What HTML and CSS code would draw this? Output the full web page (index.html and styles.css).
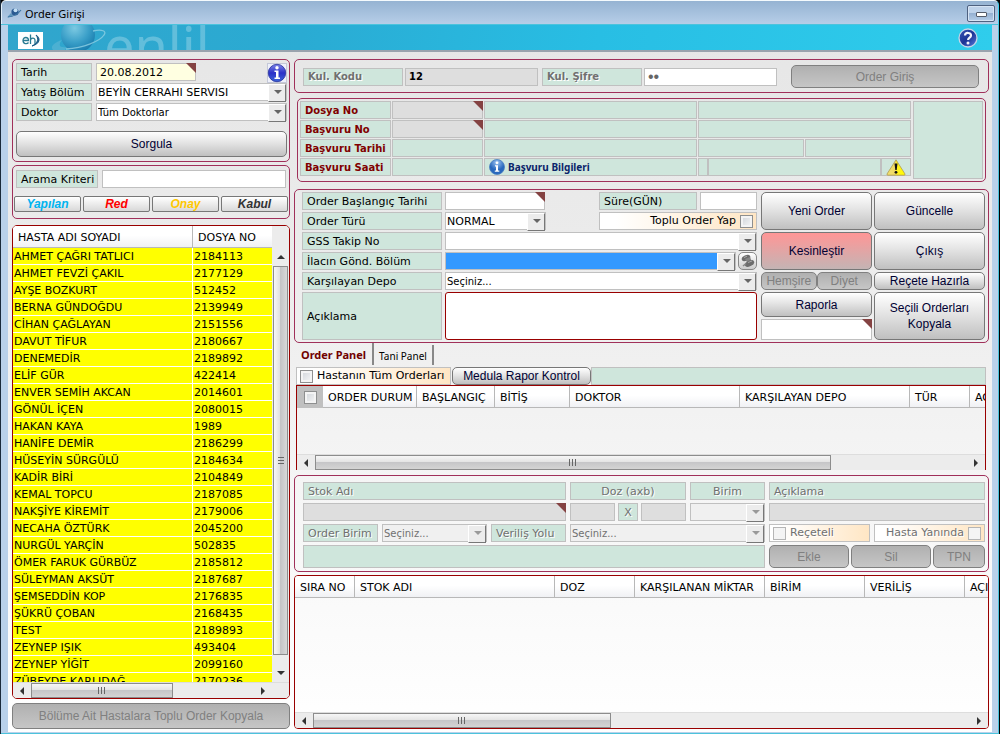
FILE: index.html
```html
<!DOCTYPE html>
<html lang="tr">
<head>
<meta charset="utf-8">
<title>Order Girişi</title>
<link rel="stylesheet" href="styles.css">
</head>
<body>
<div class="window">
  <header class="titlebar">
    <svg class="title-icon" width="15" height="12" viewBox="0 0 15 12" aria-hidden="true"><path d="M0 10.500 4 6l2 3z" fill="#5f97bd"/><circle cx="8" cy="5" r="3.600" fill="#2a5a92"/><circle cx="8.500" cy="3.300" r="2" fill="#c4e0f4"/><path d="M1 10Q9 9.500 14 3" fill="none" stroke="#3d75a3" stroke-width="1.200"/></svg>
    <h1 class="title">Order Girişi</h1>
    <button class="minimize" aria-label="Simge durumuna küçült"><span class="min-glyph"></span></button>
  </header>
  <div class="frame">
    <div class="banner">
      <svg class="logo" width="25" height="17" viewBox="0 0 25 17" role="img" aria-label="eh"><rect width="25" height="17" fill="#fff"/><g fill="none" stroke="#2a7b92" stroke-width="1.3"><path d="M5 8.500h5.500C10.500 4.500 5 4.500 5 8.500c0 3.500 4 4 5.500 2"/><path d="M12.500 2.500V12M12.500 8.500c0-3 4.500-3.500 4.500 0V12"/></g><path d="M18 3c5 3 4 9-4 11 6-3 7-7 4-11z" fill="#1d5b86" stroke="#1d5b86"/></svg>
      <svg class="planet" width="56" height="25" viewBox="0 0 56 25" aria-hidden="true"><defs><radialGradient id="pl" cx=".4" cy=".3" r=".7"><stop offset="0" stop-color="#7cc9e2"/><stop offset=".6" stop-color="#3a9fc8"/><stop offset="1" stop-color="#1b7fb0"/></radialGradient></defs><path d="M11 15C2 18-1 22 2 25h12l2-3C8 23 7 20 11 15z" fill="#5fb8d6" opacity=".6"/><circle cx="27" cy="10" r="17" fill="url(#pl)"/><path d="M42 6c9-2 14 0 11 4-4 6-20 13-38 14" fill="none" stroke="#8fd0e4" stroke-width="1.300" opacity=".8"/></svg>
      <span class="brand">enlil</span>
      <button class="help" aria-label="Yardım"><svg width="20" height="20" viewBox="0 0 20 20"><defs><linearGradient id="hp" x2="1" y2="1"><stop offset="0" stop-color="#3a55b5"/><stop offset=".5" stop-color="#1c3495"/><stop offset="1" stop-color="#5a7fe0"/></linearGradient></defs><circle cx="10" cy="10" r="9" fill="url(#hp)" stroke="#c5d5e8" stroke-width="1.300"/><path d="M7 7.500c.2-3.500 6.300-3.300 6 .2-.2 2-2.900 2-2.900 4.300" fill="none" stroke="#f3f3fa" stroke-width="2.200"/><circle cx="10" cy="15" r="1.500" fill="#f3f3fa"/></svg></button>
    </div>
    <main class="content">
      <section class="side">
        <form class="panel search">
          <div class="row"><label class="cell w76" for="tarih">Tarih</label><span class="marked w100"><input class="field date" id="tarih" value="20.08.2012"></span><span class="grow"></span><button type="button" class="info-btn" aria-label="Bilgi"><svg width="20" height="20" viewBox="0 0 20 20"><defs><linearGradient id="in" y2="1" x2="0"><stop offset="0" stop-color="#7d85e8"/><stop offset=".5" stop-color="#2b30c8"/><stop offset="1" stop-color="#3d66d8"/></linearGradient></defs><rect x=".5" y=".5" width="19" height="19" fill="#eef0fa" stroke="#c4c8d8"/><circle cx="10" cy="10" r="8.700" fill="url(#in)" stroke="#26309a" stroke-width=".8"/><circle cx="10" cy="4.700" r="1.700" fill="#fff"/><path d="M7.500 7.500h4v7h1.500v1.500h-5.500v-1.500H9V9H7.500z" fill="#fff"/></svg></button></div>
          <div class="row"><label class="cell w76" for="bolum">Yatış Bölüm</label><span class="combo grow"><select id="bolum"><option>BEYİN CERRAHI SERVISI</option></select></span></div>
          <div class="row"><label class="cell w76" for="doktor">Doktor</label><span class="combo small grow"><select id="doktor"><option>Tüm Doktorlar</option></select></span></div>
          <button type="button" class="btn query">Sorgula</button>
        </form>
        <form class="panel filter">
          <div class="row filter-row"><label class="cell w82" for="arama">Arama Kriteri</label><input class="field grow" id="arama"></div>
          <div class="states"><button type="button" class="state done">Yapılan</button><button type="button" class="state red">Red</button><button type="button" class="state wait">Onay</button><button type="button" class="state ok">Kabul</button></div>
        </form>
        <div class="list">
          <div class="list-main">
            <div class="list-view">
              <table class="patients">
                <colgroup><col><col class="no-col"></colgroup>
                <thead><tr><th>HASTA ADI SOYADI</th><th>DOSYA NO</th></tr></thead>
                <tbody>
                <tr><td>AHMET ÇAĞRI TATLICI</td><td>2184113</td></tr>
                <tr><td>AHMET FEVZİ ÇAKIL</td><td>2177129</td></tr>
                <tr><td>AYŞE BOZKURT</td><td>512452</td></tr>
                <tr><td>BERNA GÜNDOĞDU</td><td>2139949</td></tr>
                <tr><td>CİHAN ÇAĞLAYAN</td><td>2151556</td></tr>
                <tr><td>DAVUT TİFUR</td><td>2180667</td></tr>
                <tr><td>DENEMEDİR</td><td>2189892</td></tr>
                <tr><td>ELİF GÜR</td><td>422414</td></tr>
                <tr><td>ENVER SEMİH AKCAN</td><td>2014601</td></tr>
                <tr><td>GÖNÜL İÇEN</td><td>2080015</td></tr>
                <tr><td>HAKAN KAYA</td><td>1989</td></tr>
                <tr><td>HANİFE DEMİR</td><td>2186299</td></tr>
                <tr><td>HÜSEYİN SÜRGÜLÜ</td><td>2184634</td></tr>
                <tr><td>KADİR BİRİ</td><td>2104849</td></tr>
                <tr><td>KEMAL TOPCU</td><td>2187085</td></tr>
                <tr><td>NAKŞİYE KİREMİT</td><td>2179006</td></tr>
                <tr><td>NECAHA ÖZTÜRK</td><td>2045200</td></tr>
                <tr><td>NURGÜL YARÇİN</td><td>502835</td></tr>
                <tr><td>ÖMER FARUK GÜRBÜZ</td><td>2185812</td></tr>
                <tr><td>SÜLEYMAN AKSÜT</td><td>2187687</td></tr>
                <tr><td>ŞEMSEDDİN KOP</td><td>2176835</td></tr>
                <tr><td>ŞÜKRÜ ÇOBAN</td><td>2168435</td></tr>
                <tr><td>TEST</td><td>2189893</td></tr>
                <tr><td>ZEYNEP IŞIK</td><td>493404</td></tr>
                <tr><td>ZEYNEP YİĞİT</td><td>2099160</td></tr>
                <tr><td>ZÜBEYDE KARLIDAĞ</td><td>2170236</td></tr>
                </tbody>
              </table>
            </div>
            <div class="vbar"><span class="arrow up"></span><span class="vthumb"></span><span class="arrow down"></span></div>
          </div>
          <div class="hbar list-hbar"><span class="arrow left"></span><span class="hthumb t-list"></span><span class="grow"></span><span class="arrow right"></span></div>
        </div>
        <button class="btn bulk" disabled>Bölüme Ait Hastalara Toplu Order Kopyala</button>
      </section>

      <section class="work">
        <form class="panel login">
          <label class="cell bold dim w100" for="kod">Kul. Kodu</label>
          <input class="field grey code" id="kod" value="12">
          <label class="cell bold dim w100 second" for="sifre">Kul. Şifre</label>
          <input class="field pass" id="sifre" type="password" value="12">
          <button type="button" class="btn grow enter" disabled>Order Giriş</button>
        </form>

        <div class="panel visit">
          <div class="visit-grid">
            <label class="cell head" for="dosya">Dosya No</label><span class="marked"><input class="field grey" id="dosya"></span><div class="cell"></div><div class="cell"></div>
            <label class="cell head" for="basvuru">Başvuru No</label><span class="marked"><input class="field grey" id="basvuru"></span><div class="cell"></div><div class="cell"></div>
            <div class="cell head">Başvuru Tarihi</div><div class="cell"></div><div class="cell"></div><div class="halves"><div class="cell grow"></div><div class="cell grow"></div></div>
            <div class="cell head">Başvuru Saati</div><div class="cell"></div>
            <div class="cell visit-info"><svg width="16" height="16" viewBox="0 0 16 16" aria-hidden="true"><defs><radialGradient id="vi" cx=".5" cy=".2"><stop offset="0" stop-color="#9cc4f2"/><stop offset="1" stop-color="#2968bd"/></radialGradient></defs><circle cx="8" cy="8" r="7.500" fill="url(#vi)" stroke="#4a7fc0" stroke-width=".8"/><circle cx="8" cy="3.800" r="1.400" fill="#fff"/><path d="M6 6.300h3v5.200h1.300v1.300H5.800v-1.300H7V7.600H6z" fill="#fff"/></svg><span>Başvuru Bilgileri</span></div>
            <div class="strip"><div class="cell s1"></div><div class="cell grow"></div><div class="cell s3"><svg width="20" height="17" viewBox="0 0 20 17" role="img" aria-label="Uyarı"><defs><linearGradient id="wa"><stop offset="0" stop-color="#f0e070"/><stop offset=".5" stop-color="#f0d860"/><stop offset=".5" stop-color="#ffee20"/><stop offset="1" stop-color="#ffff00"/></linearGradient></defs><path d="M10 .8 19 15q.3 1.200-1 1.200H2Q.7 16.200 1 15z" fill="url(#wa)" stroke="#b09a50" stroke-width=".8"/><path d="M8.500 4.500h3L10.700 11H9.300z" fill="#111"/><circle cx="10" cy="13.300" r="1.400" fill="#111"/></svg></div></div>
          </div>
          <div class="cell photo"></div>
        </div>

        <form class="panel order">
          <div class="order-form">
            <label class="cell" for="bas">Order Başlangıç Tarihi</label>
            <div class="line"><span class="marked w100"><input class="field" id="bas"></span><span class="grow"></span><label class="cell w98" for="sure">Süre(GÜN)</label><input class="field w57" id="sure"></div>
            <label class="cell" for="tur">Order Türü</label>
            <div class="line"><span class="combo w101"><select id="tur"><option>NORMAL</option></select></span><span class="grow"></span><label class="cell check end w158">Toplu Order Yap<input type="checkbox"></label></div>
            <label class="cell" for="gss">GSS Takip No</label>
            <span class="combo"><select id="gss"><option></option></select></span>
            <label class="cell" for="ilac">İlacın Gönd. Bölüm</label>
            <div class="line pin-line"><span class="combo blue grow"><select id="ilac"><option></option></select></span><button type="button" class="pin" aria-label="Sabitle"><svg width="15" height="14" viewBox="0 0 15 14"><ellipse cx="6" cy="4" rx="4.500" ry="2.800" fill="#6c6c6c" transform="rotate(-25 6 4)"/><path d="M5 5l5-2 2 5-4 2z" fill="#858585"/><ellipse cx="9.500" cy="9.500" rx="5" ry="2.800" fill="#6c6c6c" transform="rotate(-25 9.500 9.500)"/><path d="M3 12l3-2.500" stroke="#888" stroke-width="1.500"/><path d="M4 3.500l3-1.300M8 8.500l4-1.500" stroke="#aaa"/></svg></button></div>
            <label class="cell" for="depo">Karşılayan Depo</label>
            <span class="combo small"><select id="depo"><option>Seçiniz...</option></select></span>
            <label class="cell" for="acik">Açıklama</label>
            <textarea class="note" id="acik"></textarea>
          </div>
          <div class="actions">
            <button type="button" class="btn">Yeni Order</button><button type="button" class="btn">Güncelle</button>
            <button type="button" class="btn pink">Kesinleştir</button><button type="button" class="btn">Çıkış</button>
            <div class="pair"><button type="button" class="btn" disabled>Hemşire</button><button type="button" class="btn" disabled>Diyet</button></div><button type="button" class="btn">Reçete Hazırla</button>
            <div class="report"><button type="button" class="btn">Raporla</button><span class="marked"><input class="field" aria-label="Rapor"></span></div><button type="button" class="btn">Seçili Orderları<br>Kopyala</button>
          </div>
        </form>

        <div class="tabs" role="tablist"><button class="tab active" role="tab" aria-selected="true">Order Panel</button><button class="tab" role="tab" aria-selected="false">Tani Panel</button></div>

        <div class="toolbar"><label class="cell check all"><input type="checkbox">Hastanın Tüm Orderları</label><button class="btn medula">Medula Rapor Kontrol</button><div class="cell grow"></div></div>

        <div class="grid-box orders">
          <div class="grid-view">
            <table class="grid">
              <thead><tr><th class="pick"><input type="checkbox" aria-label="Tümünü seç"></th><th class="c94">ORDER DURUM</th><th class="c78">BAŞLANGIÇ</th><th class="c75">BİTİŞ</th><th class="c170">DOKTOR</th><th class="c170">KARŞILAYAN DEPO</th><th class="c60">TÜR</th><th class="c80">AÇIKLAMA</th></tr></thead>
            </table>
          </div>
          <div class="hbar"><span class="arrow left"></span><span class="hthumb t-orders"></span><span class="grow"></span><span class="arrow right"></span></div>
        </div>

        <form class="panel stock">
          <div class="cell dim">Stok Adı</div><div class="cell dim mid">Doz (axb)</div><div class="cell dim mid">Birim</div><label class="cell dim" for="aciklama2">Açıklama</label>
          <span class="marked"><input class="field grey" aria-label="Stok Adı" disabled></span>
          <div class="dose"><input class="field grey" aria-label="Doz a" disabled><span class="cell dim mid x">X</span><input class="field grey" aria-label="Doz b" disabled></div>
          <span class="combo off"><select aria-label="Birim" disabled><option></option></select></span>
          <input class="field grey" id="aciklama2" disabled>
          <div class="unit"><label class="cell dim w75" for="obirim">Order Birim</label><span class="combo small off grow"><select id="obirim" disabled><option>Seçiniz...</option></select></span><label class="cell dim w75" for="yol">Veriliş Yolu</label></div>
          <span class="combo small off span2"><select id="yol" disabled><option>Seçiniz...</option></select></span>
          <div class="checks"><label class="cell check dim rec"><input type="checkbox" disabled>Reçeteli</label><label class="cell check end dim grow"><span>Hasta Yanında</span><input type="checkbox" disabled></label></div>
          <div class="cell span3"></div>
          <div class="ops"><button type="button" class="btn w80" disabled>Ekle</button><button type="button" class="btn w80" disabled>Sil</button><button type="button" class="btn grow" disabled>TPN</button></div>
        </form>

        <div class="grid-box stocks">
          <div class="grid-view">
            <table class="grid">
              <thead><tr><th class="c60">SIRA NO</th><th class="c200">STOK ADI</th><th class="c80">DOZ</th><th class="c130">KARŞILANAN MİKTAR</th><th class="c100">BİRİM</th><th class="c100">VERİLİŞ</th><th class="c80">AÇIKLAMA</th></tr></thead>
            </table>
          </div>
          <div class="hbar"><span class="arrow left"></span><span class="hthumb t-stocks"></span><span class="grow"></span><span class="arrow right"></span></div>
        </div>
      </section>
    </main>
  </div>
</div>
</body>
</html>
```
FILE: styles.css
```css
* { box-sizing: border-box; }
body { margin: 0; background: #000; font-family: "DejaVu Sans", sans-serif; font-size: 11px; color: #000; }
button, input, select, textarea { font: inherit; color: inherit; margin: 0; padding: 0; min-width: 0; border-radius: 0; }
button { cursor: pointer; }
.window { height: 100vh; min-height: 700px; display: flex; flex-direction: column; overflow: hidden; border-left: 1px solid #1a2a3a; border-right: 1px solid #000; }
.titlebar { flex: none; height: 25px; display: flex; align-items: center; padding: 0 3px 0 5px; border-top: 1px solid #f4fafd; border-left: 1px solid #e4f0fa; border-right: 1px solid #3fd0ee; border-radius: 5px 5px 0 0; background: linear-gradient(#95b3d2, #b8cfe9); }
.title { flex: 1; margin: 0 0 0 3px; font: 11px "Noto Sans", sans-serif; }
.minimize { width: 28px; height: 17px; border: 1px solid #4e6180; border-radius: 2px; display: flex; align-items: center; justify-content: center; background: linear-gradient(#bed2ea 50%, #96b1d2 50%, #b5cde8); box-shadow: inset 0 0 0 1px #d6e4f4; }
.min-glyph { width: 11px; height: 5px; margin-top: 3px; border: 1px solid #555b68; border-radius: 1px; background: #fff; }
.frame { flex: 1; min-height: 0; display: flex; flex-direction: column; border: solid #b9d1ea; border-width: 0 6px 1px 7px; outline: 1px solid #4cc3dc; margin: 0 1px 1px 0; background: linear-gradient(#e6e6e6, #ebebeb 30%, #fff); }
.banner { flex: none; height: 27px; position: relative; display: flex; align-items: center; overflow: hidden; padding: 0 14px 0 10px; background: linear-gradient(100deg, #31a5cc, #2aabd3 30%, #28bee4 60%, #2fcdec); border-bottom: 2px solid #9aa3ad; }
.logo { flex: none; margin-top: 6px; }
.planet { position: absolute; left: 43px; top: 0; }
.brand { position: absolute; left: 96px; top: 0; font: 54px/40px "Noto Sans", sans-serif; color: #fff; opacity: .25; }
.help { margin-left: auto; width: 20px; height: 20px; border: 0; background: none; }
.help svg, .info-btn svg, .pin svg { display: block; }
.content { flex: 1; min-height: 0; display: grid; grid-template-columns: 278px 1fr; gap: 4px; padding: 7px 3px 3px 4px; }
.side, .work { display: flex; flex-direction: column; min-width: 0; min-height: 0; }
.panel { flex: none; border: 1px solid #a0305a; border-radius: 5px; }
.grow { flex: 1; min-width: 0; }
.row, .line { display: flex; }

.cell { display: flex; align-items: center; height: 18px; padding: 1px 4px 0; border: 1px solid #c0c0c0; background: #cfe6dc; white-space: nowrap; min-width: 0; line-height: 16px; }
.field { height: 18px; border: 1px solid #c0c0c0; background: #fff; padding: 0 3px; outline: 0; }
.grey { background: #dedede; }
.dim { color: #707070; text-shadow: 1px 1px #fff; }
.mid { justify-content: center; }
.bold { font-size: 10px; font-weight: bold; }
.marked { display: flex; position: relative; min-width: 0; }
.marked .field { width: 100%; }
.marked::after { content: ""; position: absolute; right: 0; top: 0; border: 5px solid; border-color: #844242 #844242 transparent transparent; }
.combo { display: block; position: relative; height: 18px; min-width: 0; }
.combo select { appearance: none; display: block; width: 100%; height: 18px; border: 1px solid #c0c0c0; background: #fff; padding: 0 18px 0 1px; outline: 0; opacity: 1; }
.combo.small select { font-size: 10px; }
.combo.blue select { background: #3399ff; }
.combo.off select { background: #f0f0f0; color: #707070; }
.combo::before { content: ""; position: absolute; right: 1px; top: 1px; width: 16px; height: 16px; background: #ececec; border: 1px solid; border-color: #fff #777 #777 #fff; pointer-events: none; }
.combo::after { content: ""; position: absolute; right: 5px; top: 7px; border: 4px solid transparent; border-top-color: #666; border-bottom: 0; pointer-events: none; }
.combo.off::after { border-top-color: #999; }
.check { gap: 4px; padding-top: 0; background: linear-gradient(90deg, #fff, #fff 10%, #ffe6c4); }
.check.end { justify-content: flex-end; }
.check input, .pick input { appearance: none; flex: none; width: 13px; height: 13px; border: 1px solid #8e8f8f; background: linear-gradient(135deg, #cfd3d8, #f8f8f8); box-shadow: inset 0 0 0 2px #f4f4f4; }
.check input:disabled { border-color: #b5b5b5; background: #f4f4f4; }

.btn { font: 12px/16px "Liberation Sans", sans-serif; color: #000033; border: 1px solid #777; border-radius: 5px; background: linear-gradient(#fff, #e4e4e4 45%, #c0c0c0); }
.btn:disabled { color: #808080; background: linear-gradient(#b0b0b0, #c6c6c6); border-color: #808080; }
.btn.pink { background: linear-gradient(#ff9696, #c4b4b4); }

.w57 { width: 57px; } .w75 { width: 75px; } .w76 { width: 76px; } .w80 { width: 80px; } .w82 { width: 82px; } .w98 { width: 98px; } .w100 { width: 100px; } .w101 { width: 101px; } .w158 { width: 158px; }

.search { display: flex; flex-direction: column; gap: 2px; padding: 3px 2px 4px 3px; }
.search .row { gap: 4px; height: 18px; }
.date { background: #ffffe1; }
.info-btn { width: 20px; height: 20px; border: 0; background: none; }
.query { height: 26px; margin-top: 8px; }
.filter { margin-top: 3px; padding: 4px 1px 6px; }
.filter-row { gap: 4px; padding: 0 2px; }
.states { display: grid; grid-template-columns: repeat(4, 1fr); gap: 2px; margin-top: 8px; }
.state { height: 16px; font: italic bold 12px/14px "Liberation Sans", sans-serif; border: 1px solid #777; border-radius: 2px; background: linear-gradient(#fff, #d8d8d8); }
.done { color: #00b4f0; } .state.red { color: #f00; } .wait { color: #ffc800; } .ok { color: #333; }

.list { flex: 1; min-height: 0; display: flex; flex-direction: column; margin-top: 6px; border: 1px solid #900; border-radius: 5px; overflow: hidden; }
.list-main { flex: 1; min-height: 0; display: flex; }
.list-view { flex: 1; min-width: 0; overflow: hidden; background: #fff; }
.patients, .grid { border-collapse: separate; border-spacing: 0; table-layout: fixed; }
.patients { width: 100%; }
.no-col { width: 79px; }
th { height: 22px; padding: 1px 5px 0; font-size: 11px; font-weight: normal; text-align: left; white-space: nowrap; border-bottom: 1px solid #b8b8b8; border-right: 1px solid #b8b8b8; background: linear-gradient(#fff 45%, #f0f1f4); }
.patients th:last-child { border-right: 0; }
td { height: 17px; padding: 1px 1px 0; line-height: 15px; background: #ff0; border-bottom: 1px solid #fff; border-right: 1px solid #fff; white-space: nowrap; overflow: hidden; }
td:last-child { border-right: 0; padding-left: 1px; }
.vbar { width: 17px; padding: 22px 1px 0; display: flex; flex-direction: column; align-items: center; background: #ececec; }
.vthumb { flex: 1; width: 15px; border: 1px solid #8c8c8c; background: repeating-linear-gradient(#666 0 1px, transparent 1px 3px) 50% 50% / 6px 7px no-repeat, linear-gradient(90deg, #f6f6f6, #dedede 50%, #c4c4c6 50%, #d8d8d8); }
.arrow { flex: none; position: relative; width: 18px; height: 15px; display: flex; align-items: center; justify-content: center; }
.vbar .arrow { height: 18px; }
.vbar .down { height: 27px; padding-top: 8px; }
.arrow::after { content: ""; border: 4px solid transparent; }
.up::after { border-bottom-color: #333; border-top: 0; }
.down::after { border-top-color: #333; border-bottom: 0; }
.left::after { border-right-color: #333; border-left: 0; }
.right::after { border-left-color: #333; border-right: 0; }
.hbar { flex: none; display: flex; height: 16px; background: #ececec; border-top: 1px solid #ddd; }
.list-hbar { padding-right: 17px; }
.hthumb { border: 1px solid #8c8c8c; background: repeating-linear-gradient(90deg, #666 0 1px, transparent 1px 3px) 50% 50% / 8px 7px no-repeat, linear-gradient(#f6f6f6, #e2e2e2 50%, #c6c6c8 50%, #d4d4d4); }
.t-list { width: 55%; } .t-orders { width: 75%; } .t-stocks { width: 43%; }
.bulk { height: 26px; margin-top: 4px; }

.login { display: flex; align-items: center; padding: 5px 9px 4px 8px; gap: 2px; }
.code { width: 133px; font-size: 10px; font-weight: bold; }
.pass { width: 133px; color: #666; font: 16px "Liberation Sans", sans-serif; }
.second { margin-left: 2px; }
.enter { height: 23px; margin-left: 12px; }
.visit { display: flex; gap: 2px; margin: 5px 3px 0; padding: 2px; }
.visit-grid { flex: 1; display: grid; grid-template-columns: 91px 91px 1fr 1fr; grid-auto-rows: 18px; gap: 1px; }
.head { font-size: 10px; font-weight: bold; color: #800000; padding-top: 2px; }
.halves { display: flex; gap: 1px; }
.visit-info { font-size: 10px; font-weight: bold; color: #0a246a; gap: 3px; padding-top: 0; }
.visit-info span { font-family: "Noto Sans", sans-serif; }
.strip { display: flex; }
.s1 { width: 10px; } .s3 { width: 30px; justify-content: center; padding-top: 0; }
.photo { width: 70px; height: 78px; }

.order { display: flex; gap: 4px; margin-top: 7px; padding: 2px 3px 2px 7px; }
.order-form { flex: 1; display: grid; grid-template-columns: 140px 1fr; grid-template-rows: repeat(5, 18px) 48px; gap: 2px 3px; }
.order-form .cell { height: auto; }
.line { gap: 3px; }
.line .check { padding-right: 3px; }
.pin-line { gap: 2px; }
.pin { width: 19px; height: 18px; border: 1px solid #888; border-radius: 5px; padding: 1px; background: linear-gradient(#fff, #ccc); }
.note { height: 48px; border: 1px solid #900; border-radius: 3px; background: #fff; resize: none; outline: 0; }
.actions { display: grid; grid-template-columns: 111px 111px; grid-template-rows: 38px 38px 18px 48px; gap: 2px; }
.pair { display: grid; grid-template-columns: 1fr 1fr; }
.report { display: grid; grid-template-rows: 25px 21px; gap: 2px; }
.report .field { height: 21px; }

.tabs { flex: none; display: flex; align-items: flex-end; height: 23px; margin-top: 1px; padding: 0 0 2px 1px; }
.tab { width: 60px; height: 20px; padding: 2px 0 0; border: 0; border-right: 2px solid #888; background: none; font: 10px "Noto Sans", sans-serif; white-space: nowrap; }
.tab.active { width: 79px; height: 22px; padding: 0; font-size: 11px; font-weight: bold; color: #700000; }
.toolbar { flex: none; display: flex; margin: 0 3px 0 2px; }
.all { width: 155px; padding: 0 3px; }
.medula { width: 139px; height: 18px; margin-left: 1px; }
.grid-box { display: flex; flex-direction: column; border: 1px solid #900; overflow: hidden; }
.orders { flex: none; height: 85px; margin: 0 3px 0 2px; border-bottom: 0; }
.stocks { flex: 1; min-height: 0; margin-top: 3px; border-radius: 4px; }
.grid-view { flex: 1; min-height: 0; overflow: hidden; }
.grid { width: 0; }
.grid th { overflow: hidden; }
.grid .pick { width: 26px; background: #c0c0c0; border: 0; padding: 0; text-align: center; }
.pick input { display: block; margin: 0 auto; }
.c60 { width: 60px; } .c75 { width: 75px; } .c78 { width: 78px; } .c80 { width: 80px; } .c94 { width: 94px; } .c100 { width: 100px; } .c130 { width: 130px; } .c170 { width: 170px; } .c200 { width: 200px; }

.stock { display: grid; grid-template-columns: 1fr 116px 75px 216px; gap: 3px 4px; margin-top: 5px; padding: 6px 3px 3px 8px; }
.dose { display: grid; grid-template-columns: 1fr 20px 1fr; gap: 3px; }
.unit, .checks { display: flex; gap: 4px; min-width: 0; }
.span2 { grid-column: span 2; }
.span3 { grid-column: span 3; height: 23px; }
.rec { width: 101px; padding: 0 3px; }
.checks .end { padding: 0 3px; }
.ops { display: flex; gap: 2px; }
```
